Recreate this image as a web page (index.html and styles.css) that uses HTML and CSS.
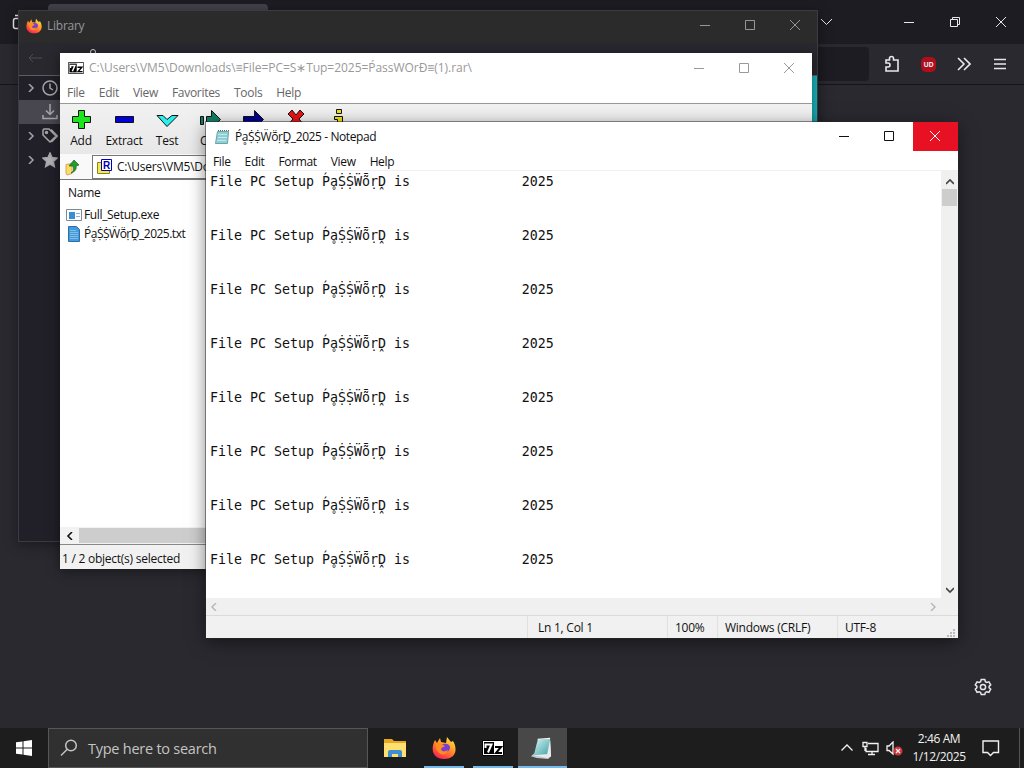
FILE: index.html
```html
<!DOCTYPE html>
<html lang="en">
<head>
    <meta charset="UTF-8">
    <meta name="viewport" content="width=device-width,initial-scale=1.0">
    <title>Desktop</title>
    <link rel="stylesheet" href="styles.css">
</head>
<body>
<!--shared icons-->
<svg class="defs" width="0" height="0">
    <defs>
        <linearGradient id="flame" x1="0.8" y1="0" x2="0.2" y2="1">
            <stop offset="0" stop-color="#ffe747"/>
            <stop offset="0.45" stop-color="#ff9327"/>
            <stop offset="0.8" stop-color="#ff4040"/>
            <stop offset="1" stop-color="#ea1e71"/>
        </linearGradient>
        <linearGradient id="page" x1="0" y1="0" x2="1" y2="1">
            <stop offset="0" stop-color="#d5f2f2"/>
            <stop offset="1" stop-color="#3fa3a8"/>
        </linearGradient>
    </defs>
    <symbol id="firefox" viewBox="0 0 24 24">
        <path d="M3 4l2 3 3-5 1 4 5 1 1-6 4 5 2-1c5 8 3 18-9 18C1 23-2 14 3 4z" fill="url(#flame)"/>
        <path d="M9 9c3-2 8-2 9 2 0 4-3 6-6 5-3-1-4-4-3-7z" fill="#7a3fd0"/>
        <path d="M4 8l4-1 5 3c-1 1-3 1-4 3 0 3 4 3 7 1-1 5-7 6-10 2-2-2-2-5-2-8z" fill="#ff8c22"/>
    </symbol>
    <symbol id="sevenzip" viewBox="0 0 22 16">
        <path fill="#fff" stroke="#000" d="M.5.5h21v15H.5z"/>
        <path fill="#000" d="M2 2h10v12H2z"/>
        <path fill="none" stroke="#fff" stroke-width="2" d="M3.500 8V4.500H9.500L6 12.500"/>
        <path fill="none" stroke="#000" stroke-width="2" d="M13 7h6l-5 6h6"/>
    </symbol>
    <symbol id="notepad" viewBox="0 0 24 24">
        <path fill="#c1cccc" d="M1 20l6 2 12 1 3-3-1-17z"/>
        <path fill="url(#page)" d="M8 3l13-1-3 16-14 1z"/>
        <path fill="none" stroke="#eaf8f8" stroke-width="1.500" d="M8 2.500l13-1"/>
        <path fill="#e9e9ee" d="M21 3l1 17-4 2-14-3 14-1z"/>
    </symbol>
    <symbol id="notepad-small" viewBox="0 0 16 16">
        <path fill="#8fcfd3" stroke="#6ba5aa" d="M3.500 2.500h11l-1 12h-12z"/>
        <path fill="none" stroke="#c4e8ea" d="M4 5.500h9M4 8.500h9M3 11.500h9"/>
        <path fill="none" stroke="#4d6e72" stroke-dasharray="1 1" d="M4 1.500h11"/>
    </symbol>
    <symbol id="close" viewBox="0 0 10 10"><path d="M0 0l10 10M10 0L0 10"/></symbol>
    <symbol id="max" viewBox="0 0 10 10"><path d="M.5.5h9v9h-9z"/></symbol>
    <symbol id="min" viewBox="0 0 10 10"><path d="M0 5.500h10"/></symbol>
    <symbol id="right" viewBox="0 0 8 8"><path d="M2 0l4 4-4 4"/></symbol>
    <symbol id="left" viewBox="0 0 8 8"><path d="M6 0L2 4l4 4"/></symbol>
    <symbol id="up" viewBox="0 0 8 8"><path d="M0 6l4-4 4 4"/></symbol>
    <symbol id="down" viewBox="0 0 8 8"><path d="M0 2l4 4 4-4"/></symbol>
</svg>

<div class="desktop">
    <!--browser-->
    <div class="browser">
        <div class="tabs">
            <svg class="view" width="12" height="18" viewBox="0 0 12 18"><path d="M10 5.500H6.500q-2 0-2 2v6q0 2 2 2H10M6 2.500h6"/></svg>
            <div class="tab"></div>
            <svg class="line alltabs" width="11" height="8" viewBox="0 0 11 8"><path d="M0 1l5.500 5.500L11 1"/></svg>
            <svg class="line b-min" width="10" height="10"><use href="#min"/></svg>
            <svg class="line b-max" width="10" height="10" viewBox="0 0 10 10"><path d="M.5 2.500h7v7h-7zM2.500 2V.5h7v7H8"/></svg>
            <svg class="line b-close" width="10" height="10"><use href="#close"/></svg>
        </div>
        <div class="navbar">
            <div class="url"></div>
            <svg class="line thick" width="16" height="18" viewBox="0 0 16 18"><path d="M2 6V5h3.500V3.500a2 2 0 0 1 4 0V5H14v11H2v-4h2a2 2 0 0 0 0-4H2V5"/></svg>
            <div class="ublock">UD</div>
            <svg class="line thick" width="14" height="14" viewBox="0 0 14 14"><path d="M1 1l6 6-6 6M7 1l6 6-6 6"/></svg>
            <svg class="line thick" width="12" height="12" viewBox="0 0 12 12"><path d="M0 1.500h12M0 6h12M0 10.500h12"/></svg>
        </div>
        <svg class="gear" width="18" height="18" viewBox="0 0 18 18">
            <path d="M7.200 1.500h3.600l.6 2.200 1.300.7 2.200-.6 1.800 3.100-1.600 1.500v1.300l1.600 1.500-1.800 3.100-2.200-.6-1.300.7-.6 2.200H7.200l-.6-2.200-1.300-.7-2.200.6-1.800-3.100 1.600-1.500V8.400L1.300 6.900l1.800-3.100 2.200.6 1.300-.7z"/>
            <circle cx="9" cy="9" r="2.600"/>
        </svg>
    </div>

    <!--library window-->
    <div class="window library">
        <div class="lib-title">
            <svg width="16" height="16"><use href="#firefox"/></svg>
            <span>Library</span>
            <div class="controls">
                <svg width="10" height="10"><use href="#min"/></svg>
                <svg width="10" height="10"><use href="#max"/></svg>
                <svg width="10" height="10"><use href="#close"/></svg>
            </div>
        </div>
        <div class="lib-tools">
            <svg class="line" width="14" height="10" viewBox="0 0 14 10"><path d="M14 5H1M5 1L1 5l4 4"/></svg>
            <i></i>
        </div>
        <div class="lib-tree">
            <div class="node">
                <svg width="8" height="8"><use href="#right"/></svg>
                <svg width="16" height="16" viewBox="0 0 16 16"><circle cx="8" cy="8" r="7"/><path d="M8 3.500V8l3 2"/></svg>
            </div>
            <div class="node selected">
                <svg width="16" height="16" viewBox="0 0 16 16"><path d="M8 0v10M4 6.500L8 10.500l4-4M1 11v3.500h14V11"/></svg>
            </div>
            <div class="node">
                <svg width="8" height="8"><use href="#right"/></svg>
                <svg width="16" height="16" viewBox="0 0 16 16"><path d="M1 2l1-1h5l7 7-6 6-7-7zM9 1.500l6.500 6.500-6 6"/><circle cx="4.500" cy="4.500" r="1"/></svg>
            </div>
            <div class="node">
                <svg width="8" height="8"><use href="#right"/></svg>
                <svg class="star" width="16" height="16" viewBox="0 0 16 16"><path d="M8 1l2 4.600 5 .5-3.700 3.400 1 5L8 12l-4.300 2.500 1-5L1 6.100l5-.5z"/></svg>
            </div>
        </div>
        <div class="lib-accent"></div>
    </div>

    <!--7-zip window-->
    <div class="window zip">
        <div class="zip-title">
            <svg width="16" height="12"><use href="#sevenzip"/></svg>
            <span>C:\Users\VM5\Downloads\≡File=PC=S∗Tυp=2025=ṔassWOrĐ≡(1).rar\</span>
            <div class="controls">
                <svg width="10" height="10"><use href="#min"/></svg>
                <svg width="10" height="10"><use href="#max"/></svg>
                <svg width="10" height="10"><use href="#close"/></svg>
            </div>
        </div>
        <div class="zip-menu">
            <span>File</span><span>Edit</span><span>View</span><span>Favorites</span><span>Tools</span><span>Help</span>
        </div>
        <div class="zip-tools">
            <div class="tool"><svg width="24" height="22" viewBox="0 0 24 22"><path fill="#1be51b" d="M9.500 1.500h6v6h6v6h-6v6h-6v-6h-6v-6h6z"/></svg>Add</div>
            <div class="tool"><svg width="24" height="22" viewBox="0 0 24 22"><path fill="#0000d8" d="M3.500 7.500h18v6h-18z"/></svg>Extract</div>
            <div class="tool"><svg width="24" height="22" viewBox="0 0 24 22"><path fill="#28eeee" d="M2 6.500h6l4 4 5-4h6L12 17.500z"/></svg>Test</div>
            <div class="tool cut"><svg width="24" height="22" viewBox="0 0 24 22"><path fill="#118066" d="M2.500 7.500h3v8h-3zM8.500 7.500h5v-6l9 9-9 9v-5h-5z"/></svg>C</div>
            <div class="tool"><svg width="24" height="22" viewBox="0 0 24 22"><path fill="#000090" d="M2.500 7.500h11v-6l9 9-9 9v-5h-11z"/></svg></div>
            <div class="tool"><svg width="24" height="22" viewBox="0 0 24 22"><path fill="#e81515" d="M4 5l4-4 4 5 4-5 4 4-5 5 5 6-4 4-4-5-4 5-4-4 5-6z"/></svg></div>
            <div class="tool"><svg width="24" height="22" viewBox="0 0 24 22"><path fill="#f1e30d" d="M9.500.5h5v4h-5zM7.500 7.500h8v9h2v3h-10v-3h3v-6h-3z"/></svg></div>
        </div>
        <div class="zip-path">
            <svg width="16" height="18" viewBox="0 0 16 18">
                <path fill="#f8df62" stroke="#e3a060" d="M1 6.500l6-1v10l-5 1.500-1-2z"/>
                <path fill="#279c2c" stroke="#14651b" stroke-width=".7" d="M6 15c3-2 3-4 2-7H4l5-6 5 5-3 1c1 4-2 6-5 7z"/>
            </svg>
            <div class="path">
                <svg width="18" height="16" viewBox="0 0 18 16">
                    <path fill="#f4ea48" stroke="#8a831f" d="M1.500 3.500h12v11h-12z"/>
                    <path fill="#fff" stroke="#0000b8" d="M5.500.5h10v11h-10z"/>
                    <text x="7" y="9.500" class="archive">R</text>
                </svg>
                <span>C:\Users\VM5\Do</span>
            </div>
        </div>
        <div class="zip-list">
            <div class="head">Name</div>
            <div class="file">
                <svg width="16" height="14" viewBox="0 0 16 14"><path fill="#fff" stroke="#7d8b98" d="M.5 1.500h15v11H.5z"/><path fill="#3a8fd4" stroke="none" d="M3 4h6v7H3z"/><path fill="none" stroke="#8bb5da" d="M10 5.500h4M10 8.500h4"/></svg>
                <span>Full_Setup.exe</span>
            </div>
            <div class="file txt">
                <svg width="16" height="16" viewBox="0 0 16 16"><path fill="#489bdb" stroke="#2a6eac" d="M2.500.5h8l3 3v12h-11z"/><path fill="none" stroke="#80bce8" d="M4 4.500h6M4 6.500h8M4 8.500h8M4 10.500h8M4 12.500h8"/></svg>
                <span>ṔḁṨṨẄṏṛḒ_2025.txt</span>
            </div>
        </div>
        <div class="zip-scroll">
            <svg width="8" height="8"><use href="#left"/></svg>
            <div class="thumb"></div>
        </div>
        <div class="zip-status">1 / 2 object(s) selected</div>
    </div>

    <!--notepad window-->
    <div class="window notepad">
        <div class="np-title">
            <svg width="16" height="16"><use href="#notepad-small"/></svg>
            <span>ṔḁṨṨẄṏṛḒ_2025 - Notepad</span>
            <div class="np-controls">
                <div><svg width="10" height="10"><use href="#min"/></svg></div>
                <div><svg width="10" height="10"><use href="#max"/></svg></div>
                <div class="red"><svg width="10" height="10"><use href="#close"/></svg></div>
            </div>
        </div>
        <div class="np-menu">
            <span>File</span><span>Edit</span><span>Format</span><span>View</span><span>Help</span>
        </div>
        <div class="np-body">
<pre class="text">File PC Setup ṔḁṨṨẄȭṛḒ is              2025


File PC Setup ṔḁṨṨẄȭṛḒ is              2025


File PC Setup ṔḁṨṨẄȭṛḒ is              2025


File PC Setup ṔḁṨṨẄȭṛḒ is              2025


File PC Setup ṔḁṨṨẄȭṛḒ is              2025


File PC Setup ṔḁṨṨẄȭṛḒ is              2025


File PC Setup ṔḁṨṨẄȭṛḒ is              2025


File PC Setup ṔḁṨṨẄȭṛḒ is              2025</pre>
            <div class="vscroll">
                <svg width="8" height="8"><use href="#up"/></svg>
                <div class="thumb"></div>
                <svg class="end" width="8" height="8"><use href="#down"/></svg>
            </div>
        </div>
        <div class="hscroll">
            <svg width="8" height="8"><use href="#left"/></svg>
            <svg width="8" height="8"><use href="#right"/></svg>
        </div>
        <div class="np-status">
            <span></span><span>Ln 1, Col 1</span><span>100%</span><span>Windows (CRLF)</span><span>UTF-8</span>
            <svg width="10" height="10" viewBox="0 0 10 10"><path d="M7 1h2v2H7zM7 4h2v2H7zM7 7h2v2H7zM4 4h2v2H4zM4 7h2v2H4zM1 7h2v2H1z"/></svg>
        </div>
    </div>
</div>

<!--taskbar-->
<div class="taskbar">
    <div class="start"><svg width="16" height="16" viewBox="0 0 16 16"><path fill="#fff" d="M0 2.300l6.500-.9v6.100H0zM7.500 1.200L16 0v7.500H7.500zM0 8.500h6.500v6.100L0 13.700zM7.500 8.500H16V16l-8.500-1.200z"/></svg></div>
    <div class="search">
        <svg width="18" height="18" viewBox="0 0 18 18"><circle cx="11" cy="6.500" r="5.300"/><path d="M7 10.500L1 16.500"/></svg>
        <span>Type here to search</span>
    </div>
    <div class="app">
        <svg width="22" height="19" viewBox="0 0 22 19"><path fill="#e8a823" d="M0 0h8l2 2h12v16H0z"/><path fill="#ffdf70" d="M0 4h22v14H0z"/><path fill="#3e8fd0" d="M4 18v-5q0-2 2-2h10q2 0 2 2v5h-4v-3H8v3z"/></svg>
    </div>
    <div class="app open"><svg width="24" height="24"><use href="#firefox"/></svg></div>
    <div class="app open"><svg width="22" height="16"><use href="#sevenzip"/></svg></div>
    <div class="app open active"><svg width="23" height="23"><use href="#notepad"/></svg></div>
    <div class="tray">
        <svg width="12" height="8" viewBox="0 0 12 8"><path d="M.5 6.500L6 1l5.500 5.500"/></svg>
        <svg width="17" height="15" viewBox="0 0 17 15"><path d="M6 2.500h10v8H4V7M10 11v3M6 13.500h7M1 1.500h4v4H1zM3 6v4"/></svg>
        <svg width="17" height="15" viewBox="0 0 17 15"><path d="M1 5h2l4-4v12L3 9.500H1z"/><circle class="mute" cx="12" cy="10" r="4.500"/><path d="M10 8l4 4M14 8l-4 4"/></svg>
    </div>
    <div class="clock">2:46 AM<br>1/12/2025</div>
    <svg class="note" width="18" height="17" viewBox="0 0 18 17"><path d="M1 1h15.500v11.500h-5L8.500 15.500l-3-3H1z"/></svg>
    <div class="peek"></div>
</div>
</body>
</html>
```
FILE: styles.css
```css
*{
    box-sizing:border-box;
    margin:0;
    padding:0;
}
body{
    width:1024px;
    height:768px;
    overflow:hidden;
    display:flex;
    flex-direction:column;
    background-color:#2a2930;
    font-family:"Open Sans", "Noto Sans", sans-serif;
    font-size:12px;
    letter-spacing:-0.25px;
    color:#111;
}
svg{
    display:block;
    flex-shrink:0;
    fill:none;
    stroke:currentColor;
}
svg use[href="#firefox"], svg use[href="#notepad"], svg use[href="#sevenzip"]{
    stroke:none;
}
.defs{
    position:absolute;
}
.desktop{
    position:relative;
    height:728px;
}
.window{
    position:absolute;
    display:flex;
    flex-direction:column;
}

/* browser */
.browser{
    height:100%;
    color:#e8e8ec;
}
.tabs{
    height:44px;
    display:flex;
    align-items:center;
    background-color:#1d1c22;
}
.view{
    margin-left:9px;
    stroke-width:1.5;
}
.tab{
    width:220px;
    height:40px;
    margin-left:27px;
    align-self:flex-end;
    border-radius:4px 4px 0 0;
    background-color:#42414b;
}
.alltabs{
    margin-left:553px;
}
.b-min{
    margin-left:72px;
}
.b-max, .b-close{
    margin-left:36px;
}
.navbar{
    height:41px;
    display:flex;
    align-items:center;
    background-color:#2a2930;
    border-bottom:1px solid #151419;
}
.url{
    width:700px;
    height:34px;
    margin-left:169px;
    margin-right:15px;
    border-radius:4px;
    background-color:#1d1c22;
}
.thick{
    stroke-width:1.6;
}
.ublock{
    width:15px;
    height:15px;
    margin:0 21px 0 21px;
    border-radius:5px;
    background-color:#b00d1d;
    font-size:7px;
    font-weight:bold;
    line-height:15px;
    text-align:center;
}
.navbar .ublock + svg{
    margin-right:23px;
}
.gear{
    position:absolute;
    left:974px;
    top:678px;
    stroke-width:1.5;
}

/* library */
.library{
    left:18px;
    top:10px;
    width:800px;
    height:532px;
    border:1px solid #3b3b41;
    background-color:#211f27;
    color:#96969a;
    box-shadow:0 3px 12px rgba(0,0,0,0.4);
}
.lib-title{
    height:32px;
    display:flex;
    align-items:center;
    padding:0 0 3px 7px;
    background-color:#2b2b2c;
}
.lib-title span{
    margin-left:5px;
}
.controls{
    display:flex;
    gap:35px;
    margin-left:auto;
    margin-right:18px;
}
.lib-title .controls{
    margin:-1px 17px 0 auto;
}
.lib-tools{
    height:33px;
    display:flex;
    align-items:flex-start;
    padding:10px 0 0 9px;
    background-color:#29282e;
    border-bottom:1px solid #5c5c63;
    color:#4b4a51;
}
.lib-tools i{
    width:6px;
    height:6px;
    margin:-4px 0 0 48px;
    border:1px solid #dcdcdc;
    border-radius:50%;
}
.node{
    height:24px;
    width:44px;
    display:flex;
    align-items:center;
    justify-content:flex-end;
    gap:7px;
    padding-right:5px;
    color:#a6a6aa;
    stroke-width:1.5;
}
.selected{
    background-color:#484750;
}
.star{
    fill:#b1b1b4;
}
.lib-accent{
    position:absolute;
    right:0;
    top:65px;
    width:6px;
    height:80px;
    background-color:#18b4bd;
}

/* 7-zip */
.zip{
    left:60px;
    top:53px;
    width:752px;
    height:516px;
    background-color:#fff;
    box-shadow:0 2px 12px rgba(0,0,0,0.45);
}
.zip-title{
    height:29px;
    display:flex;
    align-items:center;
    padding-left:8px;
    color:#999;
}
.zip-title span{
    margin-left:5px;
    letter-spacing:-0.04px;
}
.zip-menu{
    height:22px;
    display:flex;
    gap:14px;
    padding-left:7px;
    line-height:22px;
    letter-spacing:-0.3px;
    color:#666;
    border-bottom:1px solid #999;
}
.zip-tools{
    height:50px;
    display:flex;
    background:linear-gradient(#f1f1f1, #e8e8e8);
}
.tool{
    width:43px;
    display:flex;
    flex-direction:column;
    align-items:center;
    padding:5px 1px 0 0;
    line-height:19px;
}
.cut{
    text-indent:-10px;
}
.tool svg{
    stroke:#111;
}
.zip-path{
    height:26px;
    display:flex;
    align-items:center;
    padding-left:5px;
    background-color:#f9f9f9;
    border-bottom:1px solid #777;
}
.path{
    flex:1;
    height:24px;
    display:flex;
    align-items:center;
    margin-left:11px;
    padding-left:3px;
    border:1px solid #777;
    background-color:#fff;
}
.path span{
    margin-left:3px;
}
.archive{
    font-family:"Liberation Sans", sans-serif;
    font-size:10px;
    font-weight:bold;
    fill:#0000b8;
    stroke:none;
}
.zip-list{
    flex:1;
    padding-left:6px;
}
.head{
    height:25px;
    padding-left:2px;
    line-height:25px;
}
.file{
    height:19px;
    display:flex;
    align-items:center;
    gap:2px;
}
.txt span{
    letter-spacing:-0.5px;
}
.file:nth-child(2) span{
    letter-spacing:-0.35px;
}
.zip-scroll{
    height:18px;
    display:flex;
    align-items:center;
    padding-left:6px;
    background-color:#f2f2f2;
    border-bottom:1px solid #888;
    stroke-width:1.6;
}
.zip-scroll .thumb{
    width:600px;
    height:15px;
    margin-left:5px;
    background-color:#cdcdcd;
}
.zip-status{
    height:24px;
    padding-left:2px;
    line-height:28px;
    background-color:#f1f1f1;
}

/* notepad */
.notepad{
    left:206px;
    top:122px;
    width:752px;
    height:516px;
    background-color:#fff;
    box-shadow:0 0 0 1px rgba(40,40,40,0.5), 0 4px 16px rgba(0,0,0,0.5);
}
.np-title{
    height:29px;
    display:flex;
    align-items:center;
    padding-left:8px;
}
.np-title > span{
    margin-left:5px;
    letter-spacing:-0.4px;
}
.np-controls{
    display:flex;
    height:29px;
    margin-left:auto;
}
.np-controls div{
    width:45px;
    display:flex;
    align-items:center;
    justify-content:center;
    padding:0 3px 1px 0;
}
.np-controls .red{
    padding-right:1px;
    background-color:#e81123;
    color:#fff;
}
.np-menu{
    height:20px;
    display:flex;
    gap:14px;
    padding-left:7px;
    line-height:22px;
    letter-spacing:-0.35px;
    border-bottom:1px solid #f0f0f0;
}
.np-body{
    flex:1;
    display:flex;
    overflow:hidden;
}
.text{
    flex:1;
    padding:2px 0 0 4px;
    font-family:"DejaVu Sans Mono", monospace;
    font-size:13.29px;
    line-height:18px;
    letter-spacing:0;
}
.vscroll{
    width:17px;
    display:flex;
    flex-direction:column;
    align-items:center;
    padding:7px 0 4px;
    background-color:#f0f0f0;
    color:#444;
    stroke-width:1.6;
}
.vscroll .thumb{
    width:15px;
    height:17px;
    margin-top:3px;
    background-color:#cdcdcd;
}
.vscroll .end{
    margin-top:auto;
}
.hscroll{
    height:17px;
    display:flex;
    align-items:center;
    justify-content:space-between;
    padding:0 21px 0 4px;
    background-color:#f0f0f0;
    color:#b5b5b5;
    stroke-width:1.4;
}
.np-status{
    height:23px;
    display:grid;
    grid-template-columns:321px 140px 50px 120px 1fr 12px;
    grid-template-rows:22px;
    line-height:24px;
    background-color:#f1f1f1;
    border-top:1px solid #dadada;
}
.np-status span{
    padding-left:7px;
    border-left:1px solid #e0e0e0;
}
.np-status span:first-child{
    border:none;
}
.np-status span:nth-child(2){
    padding-left:10px;
}
.np-status svg{
    align-self:end;
    fill:#bbb;
    stroke:none;
}

/* taskbar */
.taskbar{
    position:relative;
    height:40px;
    display:flex;
    align-items:center;
    background-color:#1d1d1d;
    color:#f2f2f2;
}
.start{
    width:48px;
    display:flex;
    justify-content:center;
}
.start svg{
    stroke:none;
}
.search{
    width:320px;
    height:40px;
    display:flex;
    align-items:center;
    gap:10px;
    margin-right:3px;
    padding-left:11px;
    border:1px solid #565656;
    background-color:#303030;
    font-size:14.5px;
    color:#c4c4c4;
    stroke-width:1.5;
}
.app{
    position:relative;
    width:49px;
    height:40px;
    display:flex;
    align-items:center;
    justify-content:center;
    padding-right:2px;
}
.app svg{
    stroke:none;
}
.open::after{
    content:"";
    position:absolute;
    left:4px;
    right:5px;
    bottom:0;
    height:2px;
    background-color:#76b9ed;
}
.active{
    padding-right:3px;
    background-color:#484848;
}
.active::after{
    left:0;
    right:0;
}
.tray{
    display:flex;
    align-items:center;
    gap:9px;
    margin-left:auto;
    stroke-width:1.3;
}
.tray svg:last-child{
    margin-left:-2px;
}
.mute{
    fill:#d13438;
    stroke:none;
}
.clock{
    width:56px;
    margin-left:8px;
    line-height:18px;
    letter-spacing:-0.4px;
    text-align:center;
    white-space:nowrap;
}
.note{
    margin-left:15px;
    stroke-width:1.4;
}
.peek{
    width:5px;
    height:40px;
    margin-left:19px;
    border-left:1px solid #555;
}
```
